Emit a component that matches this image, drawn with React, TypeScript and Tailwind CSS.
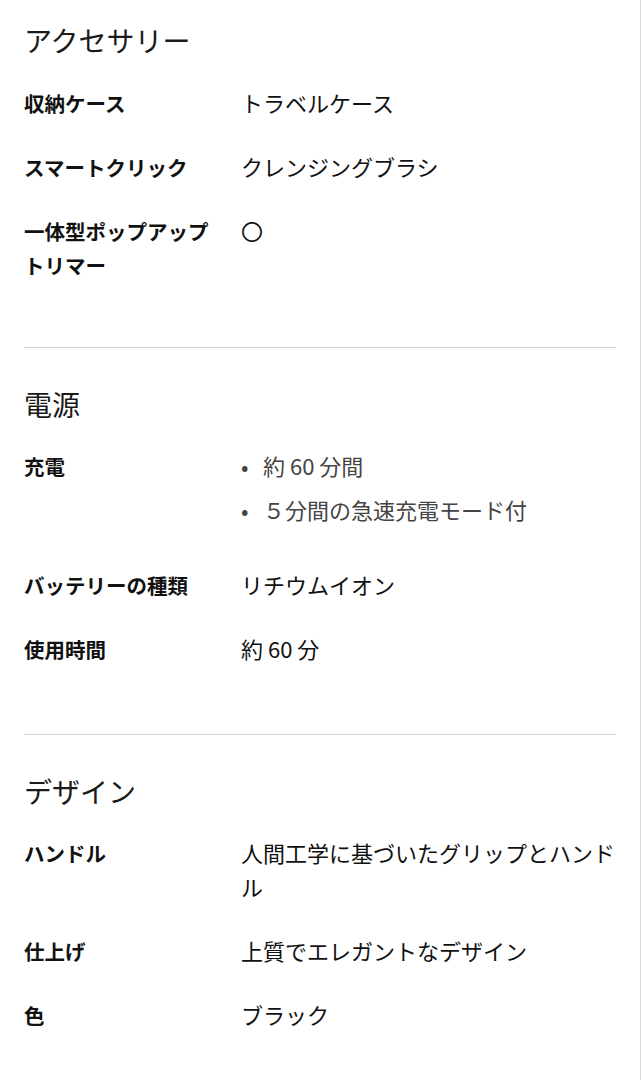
import type { ReactNode } from "react";

type Row = { label: ReactNode; value: ReactNode };

const sections: { title: string; rows: Row[]; pad: string; mt: string }[] = [
  {
    title: "アクセサリー",
    pad: "pt-[20px] pb-[66px]",
    mt: "mt-[25px]",
    rows: [
      { label: "収納ケース", value: "トラベルケース" },
      { label: "スマートクリック", value: "クレンジングブラシ" },
      { label: "一体型ポップアップトリマー", value: "〇" },
    ],
  },
  {
    title: "電源",
    pad: "pt-[36px] pb-[69px]",
    mt: "mt-[24px]",
    rows: [
      {
        label: "充電",
        value: (
          <ul className="mb-[11px] flex flex-col gap-[10px] text-[#444]">
            <li className="flex">
              <span className="w-[22px]">•</span>
              <span>約 60 分間</span>
            </li>
            <li className="flex">
              <span className="w-[22px]">•</span>
              <span>５分間の急速充電モード付</span>
            </li>
          </ul>
        ),
      },
      { label: "バッテリーの種類", value: "リチウムイオン" },
      { label: "使用時間", value: "約 60 分" },
    ],
  },
  {
    title: "デザイン",
    pad: "pt-[36px] pb-[60px]",
    mt: "mt-[24px]",
    rows: [
      { label: "ハンドル", value: "人間工学に基づいたグリップとハンドル" },
      { label: "仕上げ", value: "上質でエレガントなデザイン" },
      { label: "色", value: "ブラック" },
    ],
  },
];

export default function App() {
  return (
    <div
      className="min-h-[1080px] w-[641px] border-r border-[#d9d9d9] bg-white px-6 text-[#111]"
      style={{ fontFamily: '"Noto Sans CJK JP", "Noto Sans", sans-serif' }}
    >
      {sections.map((s, i) => (
        <section
          key={s.title}
          className={`${s.pad} ${i < sections.length - 1 ? "border-b border-[#d4d4d4]" : ""}`}
        >
          <h2 className="text-[28px] leading-[40px] font-normal text-[#1a1a1a]">{s.title}</h2>
          <dl className={`${s.mt} flex flex-col gap-[30px]`}>
            {s.rows.map((r, j) => (
              <div key={j} className="flex gap-[22px]">
                <dt className="w-[195px] shrink-0 translate-y-px text-[20.5px] leading-[34px] font-bold">
                  {r.label}
                </dt>
                <dd className="min-w-0 flex-1 text-[22px] leading-[34px]">{r.value}</dd>
              </div>
            ))}
          </dl>
        </section>
      ))}
    </div>
  );
}
